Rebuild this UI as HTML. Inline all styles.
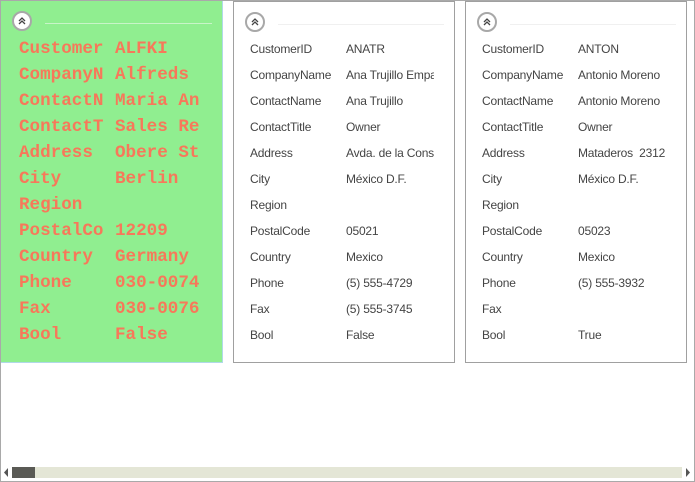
<!DOCTYPE html>
<html><head><style>
*{margin:0;padding:0;box-sizing:border-box}
body{width:695px;height:482px;background:#fff;position:relative;overflow:hidden}
.outer{position:absolute;left:0;top:0;width:695px;height:482px;border:1px solid #a9a9a9}
.card{position:absolute;top:1px;width:222px;height:362px;overflow:hidden}
.c1{left:1px;background:#90ee90;border:1px solid #b0d8e8;border-top:none;border-left:none}
.c2{left:233px;border:1px solid #a0a0a0}
.c3{left:465px;border:1px solid #a0a0a0}
.ic{position:absolute;left:11px;top:10px;width:20px;height:20px;border-radius:50%;background:#fff;border:2px solid #a8a8a8}
.ic svg{position:absolute;left:4px;top:4px}
.ln{position:absolute;left:44px;right:10px;top:22px;height:1px;background:#f0f0f0}
.c1 .ln{background:#c8f4c8}
.row{position:absolute;white-space:nowrap;overflow:hidden}
.m{font-family:"Liberation Mono",monospace;font-size:17.6px;font-weight:bold;color:#f7785a;line-height:26px}
.s{font-family:"Liberation Sans",sans-serif;font-size:12px;color:#444;line-height:26px;letter-spacing:-0.2px}
.sb{position:absolute;left:12px;top:467px;width:670px;height:11px;background:#e4e6d6}
.th{position:absolute;left:12px;top:467px;width:23px;height:11px;background:#5a5a55}
</style></head><body>
<div class="outer"></div>
<div class="card c1"><div class="ic"><svg width="8" height="8" viewBox="0 0 8 8"><path d="M1 4L4 1L7 4M1 7L4 4L7 7" fill="none" stroke="#444" stroke-width="1.3"/></svg></div><div class="ln"></div></div>
<div class="card c2"><div class="ic"><svg width="8" height="8" viewBox="0 0 8 8"><path d="M1 4L4 1L7 4M1 7L4 4L7 7" fill="none" stroke="#444" stroke-width="1.3"/></svg></div><div class="ln"></div></div>
<div class="card c3"><div class="ic"><svg width="8" height="8" viewBox="0 0 8 8"><path d="M1 4L4 1L7 4M1 7L4 4L7 7" fill="none" stroke="#444" stroke-width="1.3"/></svg></div><div class="ln"></div></div>
<div class="sb"></div><div class="th"></div>
<svg style="position:absolute;left:4px;top:468px" width="5" height="9"><path d="M4 0L0 4.5L4 9Z" fill="#555"/></svg>
<svg style="position:absolute;left:686px;top:468px" width="5" height="9"><path d="M0 0L4 4.5L0 9Z" fill="#555"/></svg>

<div class="card" style="left:1px;background:none">
<div class="row m" style="left:18px;top:35px;width:92px">Customer<br>CompanyN<br>ContactN<br>ContactT<br>Address<br>City<br>Region<br>PostalCo<br>Country<br>Phone<br>Fax<br>Bool</div>
<div class="row m" style="left:114px;top:35px;width:90px">ALFKI<br>Alfreds<br>Maria An<br>Sales Re<br>Obere St<br>Berlin<br>&nbsp;<br>12209<br>Germany<br>030-0074<br>030-0076<br>False</div>
</div>
<div class="card" style="left:233px">
<div class="row s" style="left:17px;top:35px;width:92px">CustomerID<br>CompanyName<br>ContactName<br>ContactTitle<br>Address<br>City<br>Region<br>PostalCode<br>Country<br>Phone<br>Fax<br>Bool</div>
<div class="row s" style="left:113px;top:35px;width:88px">ANATR<br>Ana Trujillo Emparedados<br>Ana Trujillo<br>Owner<br>Avda. de la Constitución<br>México D.F.<br>&nbsp;<br>05021<br>Mexico<br>(5) 555-4729<br>(5) 555-3745<br>False</div>
</div>
<div class="card" style="left:465px">
<div class="row s" style="left:17px;top:35px;width:92px">CustomerID<br>CompanyName<br>ContactName<br>ContactTitle<br>Address<br>City<br>Region<br>PostalCode<br>Country<br>Phone<br>Fax<br>Bool</div>
<div class="row s" style="left:113px;top:35px;width:90px">ANTON<br>Antonio Moreno<br>Antonio Moreno<br>Owner<br>Mataderos&nbsp; 2312<br>México D.F.<br>&nbsp;<br>05023<br>Mexico<br>(5) 555-3932<br>&nbsp;<br>True</div>
</div>
</body></html>
